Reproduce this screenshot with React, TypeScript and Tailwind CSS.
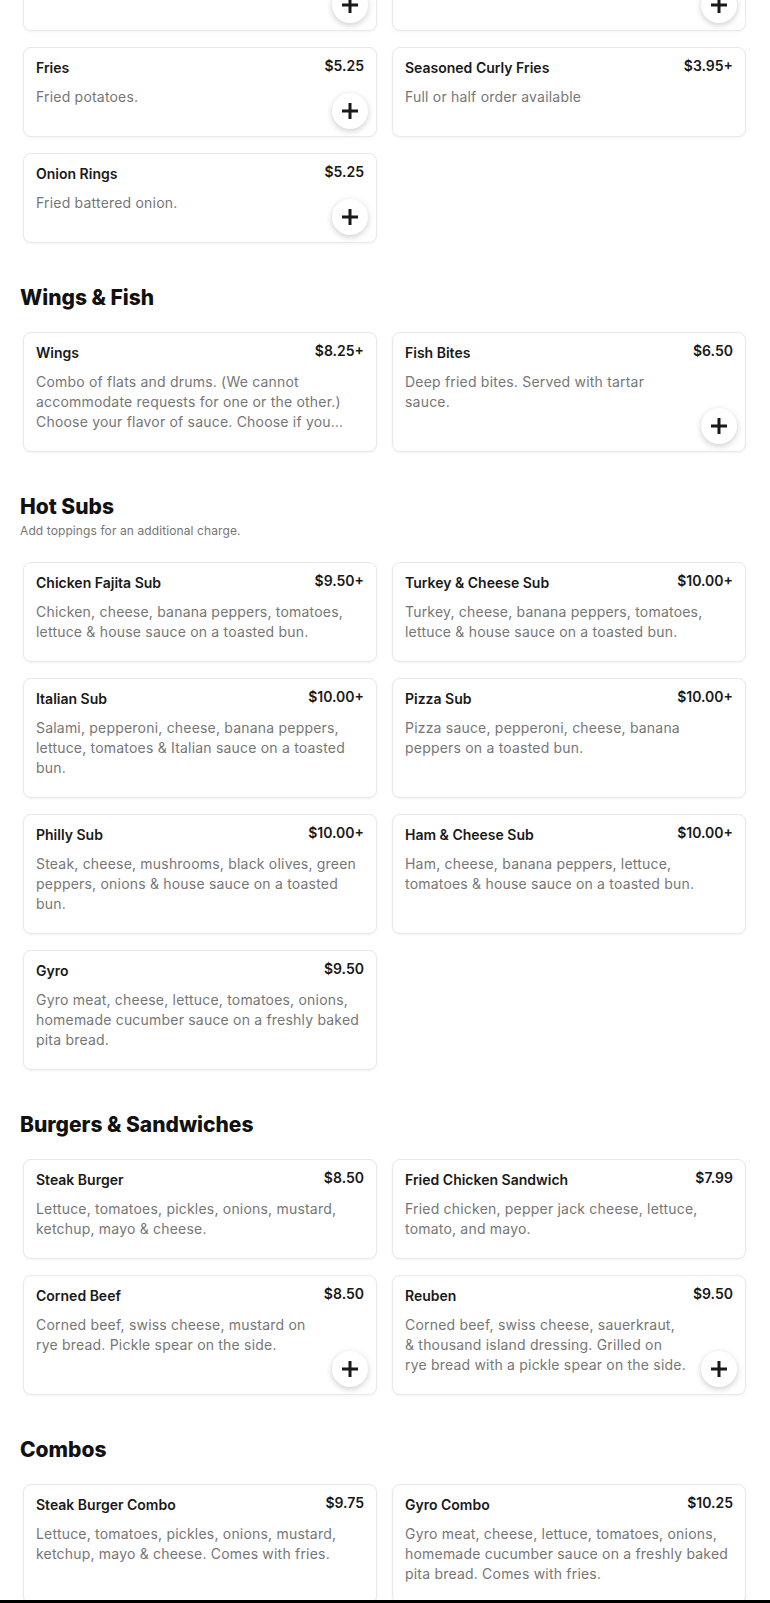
import React from 'react';

type Item = {
  name: string;
  price: string;
  desc: string;
  add?: boolean;
};

type Section = {
  title: string;
  note?: string;
  items: Item[];
};

// the row above "Fries" is only partly in view (page is scrolled)
const topRow: Item[] = [
  { name: 'Mozzarella Sticks', price: '$6.25', desc: 'Breaded mozzarella.', add: true },
  { name: 'Chili Cheese Fries', price: '$6.50', desc: 'Fries with chili and cheese.', add: true },
];

const sides: Item[] = [
  { name: 'Fries', price: '$5.25', desc: 'Fried potatoes.', add: true },
  { name: 'Seasoned Curly Fries', price: '$3.95+', desc: 'Full or half order available' },
  { name: 'Onion Rings', price: '$5.25', desc: 'Fried battered onion.', add: true },
];

const sections: Section[] = [
  {
    title: 'Wings & Fish',
    items: [
      {
        name: 'Wings',
        price: '$8.25+',
        desc: 'Combo of flats and drums. (We cannot accommodate requests for one or the other.) Choose your flavor of sauce. Choose if you…',
      },
      { name: 'Fish Bites', price: '$6.50', desc: 'Deep fried bites. Served with tartar\nsauce.', add: true },
    ],
  },
  {
    title: 'Hot Subs',
    note: 'Add toppings for an additional charge.',
    items: [
      { name: 'Chicken Fajita Sub', price: '$9.50+', desc: 'Chicken, cheese, banana peppers, tomatoes, lettuce & house sauce on a toasted bun.' },
      { name: 'Turkey & Cheese Sub', price: '$10.00+', desc: 'Turkey, cheese, banana peppers, tomatoes, lettuce & house sauce on a toasted bun.' },
      { name: 'Italian Sub', price: '$10.00+', desc: 'Salami, pepperoni, cheese, banana peppers, lettuce, tomatoes & Italian sauce on a toasted bun.' },
      { name: 'Pizza Sub', price: '$10.00+', desc: 'Pizza sauce, pepperoni, cheese, banana peppers on a toasted bun.' },
      { name: 'Philly Sub', price: '$10.00+', desc: 'Steak, cheese, mushrooms, black olives, green peppers, onions & house sauce on a toasted bun.' },
      { name: 'Ham & Cheese Sub', price: '$10.00+', desc: 'Ham, cheese, banana peppers, lettuce, tomatoes & house sauce on a toasted bun.' },
      { name: 'Gyro', price: '$9.50', desc: 'Gyro meat, cheese, lettuce, tomatoes, onions, homemade cucumber sauce on a freshly baked pita bread.' },
    ],
  },
  {
    title: 'Burgers & Sandwiches',
    items: [
      { name: 'Steak Burger', price: '$8.50', desc: 'Lettuce, tomatoes, pickles, onions, mustard, ketchup, mayo & cheese.' },
      { name: 'Fried Chicken Sandwich', price: '$7.99', desc: 'Fried chicken, pepper jack cheese, lettuce, tomato, and mayo.' },
      { name: 'Corned Beef', price: '$8.50', desc: 'Corned beef, swiss cheese, mustard on\nrye bread. Pickle spear on the side.', add: true },
      {
        name: 'Reuben',
        price: '$9.50',
        desc: 'Corned beef, swiss cheese, sauerkraut,\n& thousand island dressing. Grilled on\nrye bread with a pickle spear on the side.',
        add: true,
      },
    ],
  },
  {
    title: 'Combos',
    items: [
      { name: 'Steak Burger Combo', price: '$9.75', desc: 'Lettuce, tomatoes, pickles, onions, mustard, ketchup, mayo & cheese. Comes with fries.' },
      { name: 'Gyro Combo', price: '$10.25', desc: 'Gyro meat, cheese, lettuce, tomatoes, onions, homemade cucumber sauce on a freshly baked pita bread. Comes with fries.' },
    ],
  },
];

const PlusButton: React.FC = () => (
  <button className="mr-[-4px] mt-[19px] flex h-9 w-9 shrink-0 items-center justify-center rounded-full bg-white shadow-[0_2px_6px_rgba(0,0,0,0.2)]">
    <svg width="18" height="18" viewBox="0 0 18 18">
      <path d="M9 1v16M1 9h16" stroke="#191919" strokeWidth="3" fill="none" />
    </svg>
  </button>
);

const MenuCard: React.FC<{ item: Item }> = ({ item }) => {
  if (item.add) {
    return (
      <div className="flex rounded-lg border border-[#e9e9e9] bg-white px-3 shadow-[0_1px_3px_rgba(0,0,0,0.05)]">
        <div className="min-w-0 flex-1 pb-[19px] pt-[10px]">
          <h3 className="text-[14px] font-semibold leading-5 text-[#191919]">{item.name}</h3>
          <p className="mt-[9px] whitespace-pre-line text-[14px] leading-5 tracking-[0.2px] text-[#767676]">{item.desc}</p>
        </div>
        <div className="ml-[7px] flex w-9 shrink-0 flex-col items-end justify-between pb-[7px] pt-[10px]">
          <span className="whitespace-nowrap text-[14px] font-semibold leading-4 text-[#191919]">{item.price}</span>
          <PlusButton />
        </div>
      </div>
    );
  }
  return (
    <div className="rounded-lg border border-[#e9e9e9] bg-white px-3 pb-[19px] pt-[10px] shadow-[0_1px_3px_rgba(0,0,0,0.05)]">
      <div className="flex items-start justify-between gap-3">
        <h3 className="text-[14px] font-semibold leading-5 text-[#191919]">{item.name}</h3>
        <span className="whitespace-nowrap text-[14px] font-semibold leading-4 text-[#191919]">{item.price}</span>
      </div>
      <p className="mt-[9px] line-clamp-3 text-[14px] leading-5 tracking-[0.2px] text-[#767676]">{item.desc}</p>
    </div>
  );
};

const Grid: React.FC<{ items: Item[]; className?: string }> = ({ items, className = '' }) => (
  <div className={`grid grid-cols-2 gap-x-[15px] gap-y-4 px-[3px] ${className}`}>
    {items.map((item) => (
      <MenuCard key={item.name} item={item} />
    ))}
  </div>
);

const App: React.FC = () => {
  return (
    <div className="min-h-screen overflow-hidden bg-white font-['Inter','Noto_Sans',sans-serif] text-[#191919]">
      <div className="-mt-[59px] flex flex-col gap-[41px] pl-5 pr-[21px]">
        {/* Sides (tail of the section) */}
        <div className="flex flex-col gap-4">
          <Grid items={topRow} />
          <Grid items={sides} />
        </div>

        {sections.map((section) => (
          <section key={section.title}>
            <h2 className="text-[21px] font-extrabold leading-7 text-[#111]">{section.title}</h2>
            {section.note && (
              <p className="mt-[2px] text-[12px] leading-4 tracking-[0.1px] text-[#767676]">{section.note}</p>
            )}
            <Grid items={section.items} className={section.note ? 'mt-[23px]' : 'mt-5'} />
          </section>
        ))}
      </div>

      <div className="fixed bottom-0 left-0 right-0 h-[3px] bg-black" />
    </div>
  );
};

export default App;
